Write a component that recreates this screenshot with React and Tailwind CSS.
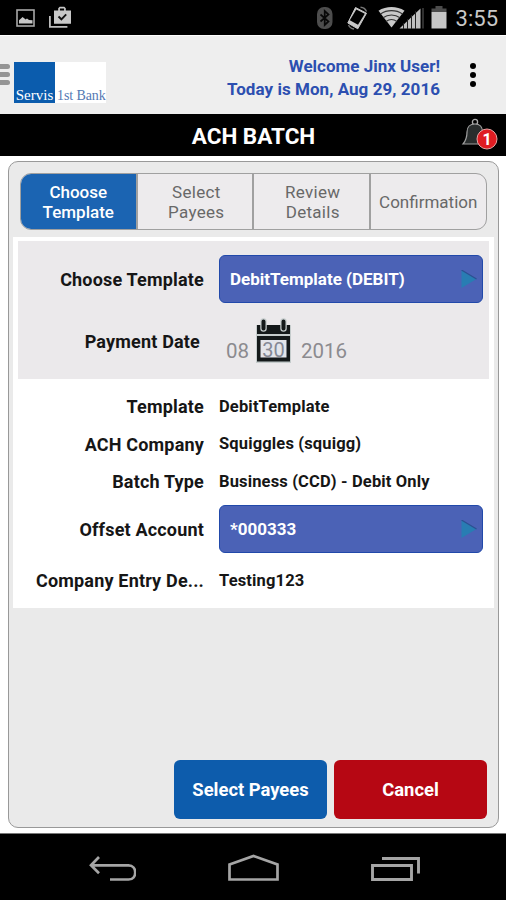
import React from 'react';

const steps = [
  { lines: ['Choose', 'Template'], width: 'w-[117px]', active: true },
  { lines: ['Select', 'Payees'], width: 'w-[117px]' },
  { lines: ['Review', 'Details'], width: 'w-[117px]' },
  { lines: ['Confirmation'], width: 'w-[116px]' },
];

const StatusBar = () => (
  <div className="flex h-[35px] items-center justify-between bg-black pl-4 pr-2">
    <div className="flex items-center gap-[13px]">
      <svg width="20" height="20" viewBox="0 0 20 20" aria-hidden="true">
        <rect x="1" y="2" width="17" height="16" fill="none" stroke="#a8a8a8" strokeWidth="1.6" />
        <path d="M3 15.5v-3.2l2-1.8 1.500-1.500 2 1.500 1 1 1.500-1 2 1.500 3.500.3v3.200z" fill="#c8c8c8" />
      </svg>
      <svg width="23" height="23" viewBox="0 0 23 23" aria-hidden="true">
        <path d="M.9 10v10.8h17.500" fill="none" stroke="#bdbdbd" strokeWidth="1.8" />
        <path d="M5 4.500h4.200V2.300L10.700.8h4.600l1.500 1.500v2.200H22v13.200H5z" fill="#c8c8c8" />
        <path d="M10.900 4.500V2.500h4.200v2z" fill="#000" />
        <path d="M9.500 10.500l2.900 2.800 4.800-4.900" fill="none" stroke="#111" strokeWidth="1.900" />
      </svg>
    </div>
    <div className="flex items-center">
      <svg className="mr-[14px]" width="17" height="24" viewBox="0 0 17 24" aria-hidden="true">
        <rect x="1" y="1" width="15.500" height="22" rx="7" fill="#4d4d4d" />
        <path d="M4.500 8.500l8 7L8.700 19V5l3.800 3.500-8 7" fill="none" stroke="#080808" strokeWidth="1.700" />
      </svg>
      <svg className="mr-[10px]" width="21" height="24" viewBox="0 0 21 24" aria-hidden="true">
        <path d="M8.500 1.500l11 5.700-8.700 15.600L.8 17z" fill="#c8c8c8" stroke="#c8c8c8" strokeLinejoin="round" />
        <path d="M9.300 3.400l8.500 4.400-6.800 11-8.200-4.600z" fill="#000" />
        <path d="M13.500 1.300c3 .2 5 1.700 6 4.200M1.500 19c1 2.300 2.700 3.700 5.500 4" fill="none" stroke="#777" strokeWidth="1.400" />
      </svg>
      <svg className="mr-[6px]" width="47" height="24" viewBox="0 0 47 24" aria-hidden="true">
        <path d="M.5 4.700C8-.2 19-.2 26.500 4.700L13.500 21.500z" fill="#c8c8c8" />
        <path d="M2.500 8c6.500-4.500 15.500-4.500 22 0M5 11.700c5-3.700 12-3.700 17 0M8 15.500c3.500-2.500 7.500-2.500 11 0" fill="none" stroke="#333" strokeWidth="1.100" />
        <path d="M21.500 22.500h21V2.500z" fill="#c0c0c0" />
        <path d="M25.500 17v6M29.500 13v10M33.500 9v14M37.500 5v18" stroke="#222" strokeWidth="1" />
        <path d="M45 2v20.500" stroke="#3b3b3b" strokeWidth="1.600" />
      </svg>
      <svg className="mr-[9px]" width="16" height="23" viewBox="0 0 16 23" aria-hidden="true">
        <path d="M4.500 0h7v2.500h4V6H.5V2.500h4z" fill="#4c4c4c" />
        <path d="M.5 6h15v16.500H.5z" fill="#c6c6c6" />
      </svg>
      <span className="mt-[2px] text-[22px] leading-[35px] text-[#c8c8c8]">3:55</span>
    </div>
  </div>
);

const Logo = () => (
  <div className="flex h-[41px] w-[92px] items-end bg-white font-['Liberation_Serif'] text-[15px] leading-[15px]">
    <div className="flex h-full w-[41px] items-end justify-center bg-[#0b5cad] text-white">
      <span>Servis</span>
    </div>
    <span className="ml-0.5 whitespace-nowrap text-[14px] tracking-[-0.1px] text-[#5579b4]">1st Bank</span>
  </div>
);

const Header = () => (
  <header className="flex h-[79px] border-t border-white bg-[#eee]">
    <div className="mt-[28px] flex w-[15px] flex-col gap-[3px]">
      <div className="h-[5px] w-[10px] rounded-r-full bg-[#959595]" />
      <div className="h-[5px] w-[10px] rounded-r-full bg-[#959595]" />
      <div className="h-[5px] w-[10px] rounded-r-full bg-[#959595]" />
    </div>
    <div className="mt-[26px] -ml-px">
      <Logo />
    </div>
    <div className="ml-auto mt-[19px] mr-[30px] whitespace-nowrap text-right text-[17px] font-bold leading-[23px] text-[#2c4fb0]">
      <p>Welcome Jinx User!</p>
      <p className="tracking-[0.05px]">Today is Mon, Aug 29, 2016</p>
    </div>
    <div className="mt-[27px] mr-[29px] flex w-[7px] flex-col gap-[3px]">
      <div className="size-[6px] rounded-full bg-black" />
      <div className="size-[6px] rounded-full bg-black" />
      <div className="size-[6px] rounded-full bg-black" />
    </div>
  </header>
);

const TitleBar = () => (
  <div className="flex h-[42px] items-center bg-black">
    <div className="w-[46px]" />
    <h1 className="flex-1 pt-[3px] text-center text-[22.5px] font-bold text-white">ACH BATCH</h1>
    <svg className="mr-[8px]" width="37" height="34" viewBox="0 0 37 34" aria-hidden="true">
      <circle cx="14" cy="4" r="2.600" fill="none" stroke="#aaa" strokeWidth="1.300" />
      <path d="M14 6c5 0 7.500 3 7.500 8v6l4 6H2c3-3.500 4-6 4-12 0-5 3-8 8-8z" fill="#292d2d" stroke="#a0a0a0" strokeWidth="1.200" />
      <circle cx="26" cy="21" r="10" fill="#df1c22" stroke="#e8a4a4" strokeWidth="1" />
      <text x="26" y="26.500" textAnchor="middle" fill="#fff" fontSize="16" fontWeight="700">1</text>
    </svg>
  </div>
);

const Steps = () => (
  <div className="mx-[11px] flex h-[57px] overflow-hidden rounded-[11px] border border-[#a0a0a0] bg-[#edebed]">
    {steps.map((step, i) => (
      <div
        key={step.lines[0]}
        className={`${step.width} flex flex-col items-center justify-center text-[17px] leading-[20px] ${
          step.active ? 'bg-[#1b64b2] font-medium text-white' : 'text-[#686868]'
        } ${step.lines.length > 1 && !step.active ? 'pl-[3px] tracking-[0.3px]' : ''} ${
          i < steps.length - 1 ? 'border-r-2 border-[#a0a0a0]' : ''
        }`}
      >
        {step.lines.map((line) => <span key={line}>{line}</span>)}
      </div>
    ))}
  </div>
);

const Row = ({ label, height, children }) => (
  <div className={`${height} flex items-center`}>
    <div className="w-[191px] shrink-0 whitespace-nowrap text-right text-[18px] font-bold tracking-[0.18px]">{label}</div>
    <div className="ml-[15px] whitespace-nowrap pt-px text-[16.5px] font-bold tracking-[0.15px]">{children}</div>
  </div>
);

const Select = ({ value }) => (
  <button type="button" className="-mt-px flex h-[48px] w-[264px] items-center justify-between rounded-[6px] border-[1.5px] border-[#2149aa] bg-[#4b62b6] pl-[10px] pr-[5px] text-[17px] font-bold tracking-normal text-white">
    <span className="pt-[2px]">{value}</span>
    <svg width="16" height="18" viewBox="0 0 16 18" aria-hidden="true">
      <path d="M.5 0l15 9-15 9z" fill="#287db3" />
      <path d="M.5 0l15 9" stroke="#2c5192" strokeWidth="1.200" />
    </svg>
  </button>
);

const DatePicker = () => (
  <div className="-mt-px flex text-[20.5px] font-normal tracking-normal text-[#8b8b8f]">
    <span className="ml-[7px] mt-[21px] leading-[24px]">08</span>
    <svg className="mx-[7px]" width="37" height="46" viewBox="0 0 37 46" aria-hidden="true">
      <path d="M0 7h35v38H0z" fill="#c5cccc" />
      <path d="M1 7h33v9H1zM1 18h33v25.500H1z" fill="#14191a" />
      <path d="M4.500 22h26v17.500h-26z" fill="#e3e5ea" />
      <path d="M7.500 3.500v7M27.500 3.500v7" stroke="#c5cccc" strokeWidth="6.500" strokeLinecap="round" />
      <path d="M7.500 3.500v7M27.500 3.500v7" stroke="#14191a" strokeWidth="4" strokeLinecap="round" />
      <text x="17.500" y="38.500" textAnchor="middle" fontSize="20" fill="#858995">30</text>
    </svg>
    <span className="ml-px mt-[21px] leading-[24px]">2016</span>
  </div>
);

const NavBar = () => (
  <nav className="flex h-[67px] items-start border-t border-[#777] bg-black pl-[88px] pt-[20px]">
    <svg width="48" height="30" viewBox="0 0 48 30" fill="none" stroke="#a5a5a5" strokeWidth="2.700" aria-hidden="true">
      <path d="M11 3L3 11.300l8 8M3 11.300h37.500c9 0 9 14.200 0 14.200H22" />
    </svg>
    <svg className="ml-[91px]" width="54" height="30" viewBox="0 0 54 30" fill="none" stroke="#a5a5a5" strokeWidth="2.700" aria-hidden="true">
      <path d="M2.500 10.500L26.500 2l24 8.500v15h-48z" />
    </svg>
    <svg className="ml-[88px]" width="52" height="30" viewBox="0 0 52 30" fill="none" stroke="#a5a5a5" strokeWidth="2.900" aria-hidden="true">
      <path d="M3.500 11.500h39v14h-39zM13 4.500h36.500v15" />
    </svg>
  </nav>
);

export default function App() {
  return (
    <div className="flex h-[900px] w-[506px] flex-col overflow-hidden bg-white font-['Roboto',sans-serif] text-[#161616]">
      <StatusBar />
      <Header />
      <TitleBar />
      <main className="flex flex-1 px-[8px] pt-[5px] pb-[5px]">
        <section className="flex w-[491px] flex-col rounded-[10px] border border-[#999] bg-[#eaeaea] pt-[11px]">
          <Steps />
          <div className="mx-[4px] mt-[7px] h-[371px] bg-white pt-[4px]">
            <div className="mx-[5px] h-[138px] bg-[#ebe9eb] pt-[13px]">
              <div className="-ml-[5px]">
                <Row label="Choose Template" height="h-[50px]">
                  <Select value="DebitTemplate (DEBIT)" />
                </Row>
                <Row label={<span className="mr-1">Payment Date</span>} height="h-[74px]">
                  <DatePicker />
                </Row>
              </div>
            </div>
            <div className="pt-[9px]">
              <Row label="Template" height="h-[37px]">DebitTemplate</Row>
              <Row label="ACH Company" height="h-[38px]">Squiggles (squigg)</Row>
              <Row label="Batch Type" height="h-[37px]">Business (CCD) - Debit Only</Row>
              <Row label="Offset Account" height="h-[58px]">
                <Select value="*000333" />
              </Row>
              <Row label="Company Entry De..." height="h-[45px]">Testing123</Row>
            </div>
          </div>
          <div className="mt-auto mr-[11px] mb-[8px] flex justify-end gap-[7px] text-[18.4px] font-bold text-white">
            <button type="button" className="h-[59px] w-[153px] rounded-[6px] bg-[#0d5cac]">Select Payees</button>
            <button type="button" className="h-[59px] w-[153px] rounded-[6px] bg-[#b60713]">Cancel</button>
          </div>
        </section>
      </main>
      <NavBar />
    </div>
  );
}
